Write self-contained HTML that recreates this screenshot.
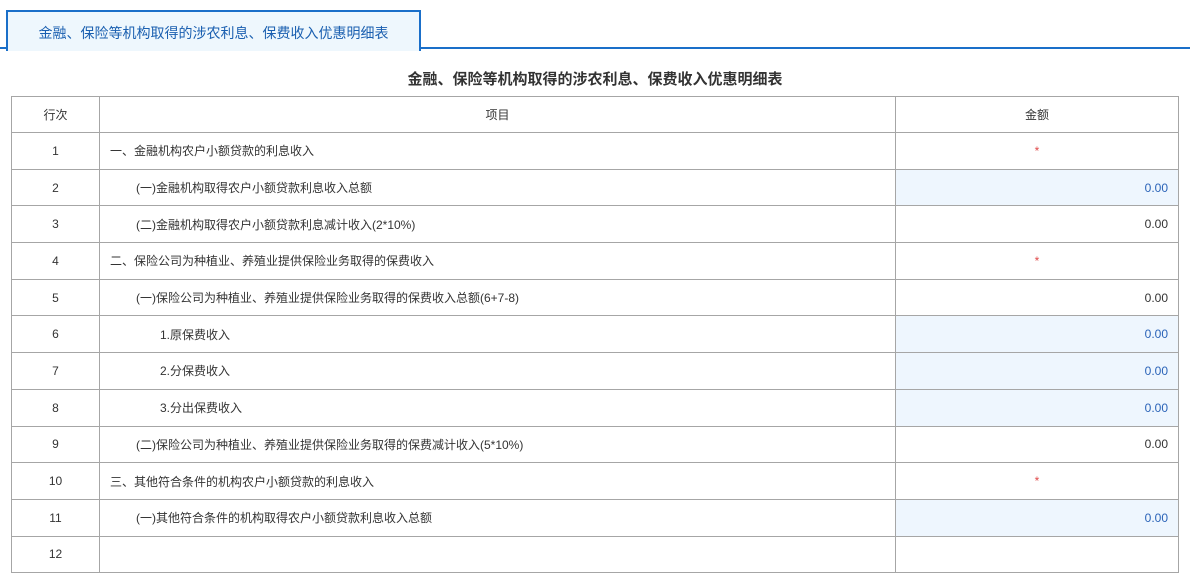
<!DOCTYPE html>
<html><head><meta charset="utf-8"><style>
body{margin:0;background:#fff;font-family:"Liberation Sans","Noto Sans CJK SC",sans-serif;width:1190px;height:539px;overflow:hidden;position:relative}
.line{position:absolute;left:0;top:47px;width:1190px;height:2px;background:#1a6fc9}
.tab{position:absolute;left:6px;top:10px;width:411px;border:2px solid #1a6fc9;border-bottom:none;background:#eef7fd;color:#1a5fb0;font-size:14px;line-height:42px;text-align:center;z-index:2;height:39px}
h1{position:absolute;top:68px;left:0;width:1190px;text-align:center;margin:0;font-size:15px;font-weight:bold;color:#333}
table{position:absolute;left:11px;top:96px;border-collapse:collapse;font-size:12px;color:#333;table-layout:fixed;width:1167px}
td{border:1px solid #a6a6a6;height:36.7px;padding:0;box-sizing:border-box}
tr.h td{height:36px}
td.a span{margin-right:10px}
td.a{text-align:right}
td.n{text-align:center}
.blue{background:#eef6fe;color:#2a63b8}
.star{color:#e04a4a;text-align:center!important}
.l1{padding-left:10px}.l2{padding-left:36px}.l3{padding-left:60px}
</style></head><body>
<div class="line"></div>
<div class="tab">金融、保险等机构取得的涉农利息、保费收入优惠明细表</div>
<h1>金融、保险等机构取得的涉农利息、保费收入优惠明细表</h1>
<table>
<colgroup><col style="width:88px"><col style="width:796px"><col style="width:283px"></colgroup>
<tr class="h"><td class="n">行次</td><td class="t" style="text-align:center">项目</td><td class="a" style="text-align:center">金额</td></tr>
<tr><td class="n">1</td><td class="t l1">一、金融机构农户小额贷款的利息收入</td><td class="a star">*</td></tr>
<tr><td class="n">2</td><td class="t l2">(一)金融机构取得农户小额贷款利息收入总额</td><td class="a blue"><span>0.00</span></td></tr>
<tr><td class="n">3</td><td class="t l2">(二)金融机构取得农户小额贷款利息减计收入(2*10%)</td><td class="a"><span>0.00</span></td></tr>
<tr><td class="n">4</td><td class="t l1">二、保险公司为种植业、养殖业提供保险业务取得的保费收入</td><td class="a star">*</td></tr>
<tr><td class="n">5</td><td class="t l2">(一)保险公司为种植业、养殖业提供保险业务取得的保费收入总额(6+7-8)</td><td class="a"><span>0.00</span></td></tr>
<tr><td class="n">6</td><td class="t l3">1.原保费收入</td><td class="a blue"><span>0.00</span></td></tr>
<tr><td class="n">7</td><td class="t l3">2.分保费收入</td><td class="a blue"><span>0.00</span></td></tr>
<tr><td class="n">8</td><td class="t l3">3.分出保费收入</td><td class="a blue"><span>0.00</span></td></tr>
<tr><td class="n">9</td><td class="t l2">(二)保险公司为种植业、养殖业提供保险业务取得的保费减计收入(5*10%)</td><td class="a"><span>0.00</span></td></tr>
<tr><td class="n">10</td><td class="t l1">三、其他符合条件的机构农户小额贷款的利息收入</td><td class="a star">*</td></tr>
<tr><td class="n">11</td><td class="t l2">(一)其他符合条件的机构取得农户小额贷款利息收入总额</td><td class="a blue"><span>0.00</span></td></tr>
<tr><td class="n">12</td><td class="t l2"></td><td class="a"></td></tr>
</table>
</body></html>
